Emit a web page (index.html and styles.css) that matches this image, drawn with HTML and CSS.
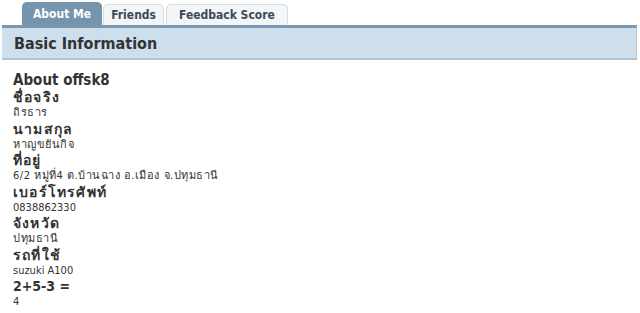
FILE: index.html
```html
<!DOCTYPE html>
<html lang="th">
<head>
    <meta charset="UTF-8">
    <title>About Me</title>
    <link rel="stylesheet" href="styles.css">
</head>
<body>
    <div class="tabs">
        <a class="tab active">About Me</a>
        <a class="tab">Friends</a>
        <a class="tab">Feedback Score</a>
    </div>
    <div class="bar">
        <h2>Basic Information</h2>
    </div>
    <div class="about">
        <h3>About offsk8</h3>
        <dl>
            <dt class="th">ชื่อจริง</dt>
            <dd class="th">ถิรธาร</dd>
            <dt class="th">นามสกุล</dt>
            <dd class="th">หาญขยันกิจ</dd>
            <dt class="th">ที่อยู่</dt>
            <dd class="th">6/2 หมู่ที่4 ต.บ้านฉาง อ.เมือง จ.ปทุมธานี</dd>
            <dt class="th">เบอร์โทรศัพท์</dt>
            <dd>0838862330</dd>
            <dt class="th">จังหวัด</dt>
            <dd class="th">ปทุมธานี</dd>
            <dt class="th">รถที่ใช้</dt>
            <dd>suzuki A100</dd>
            <dt>2+5-3 =</dt>
            <dd>4</dd>
        </dl>
    </div>
</body>
</html>
```

FILE: styles.css
```css
body {
    margin: 0;
    font-family: "DejaVu Sans Condensed", "DejaVu Sans", sans-serif;
    color: #333;
    background: #fff;
}
.tabs {
    display: flex;
    align-items: flex-end;
    height: 25px;
    padding-left: 22px;
    gap: 1px;
}
.tab {
    font-size: 12px;
    font-weight: bold;
    color: #3b4a58;
    background: #f3f5f7;
    border: 1px solid #d5dce2;
    border-bottom: none;
    border-radius: 5px 5px 0 0;
    height: 20px;
    line-height: 21px;
    padding: 0 7px;
}
.tab.active {
    background: #7594ad;
    color: #fff;
    border-color: #7594ad;
    height: 22px;
    line-height: 23px;
    padding: 0 10px;
}
.tab:last-child {
    margin-left: 1px;
    padding: 0 12px;
}
.bar {
    margin: 0 3px 0 2px;
    background: #cddfec;
    border-top: 3px solid #7b98ae;
    border-bottom: 2px solid #b4c3ce;
    border-right: 1px solid #b4c3ce;
    height: 30px;
}
.bar h2 {
    margin: 0;
    padding-left: 12px;
    font-size: 16px;
    line-height: 31px;
    color: #333;
}
.about {
    padding: 11px 13px;
}
.about h3 {
    margin: 0;
    font-size: 15px;
    line-height: 18px;
}
dl {
    margin: 0;
}
dt {
    font-size: 14px;
    font-weight: bold;
    line-height: 16px;
}
dt.th {
    letter-spacing: 1.2px;
}
dd {
    margin: 0;
    font-size: 11px;
    line-height: 15.5px;
}
dd.th {
    letter-spacing: 0.5px;
}
```
